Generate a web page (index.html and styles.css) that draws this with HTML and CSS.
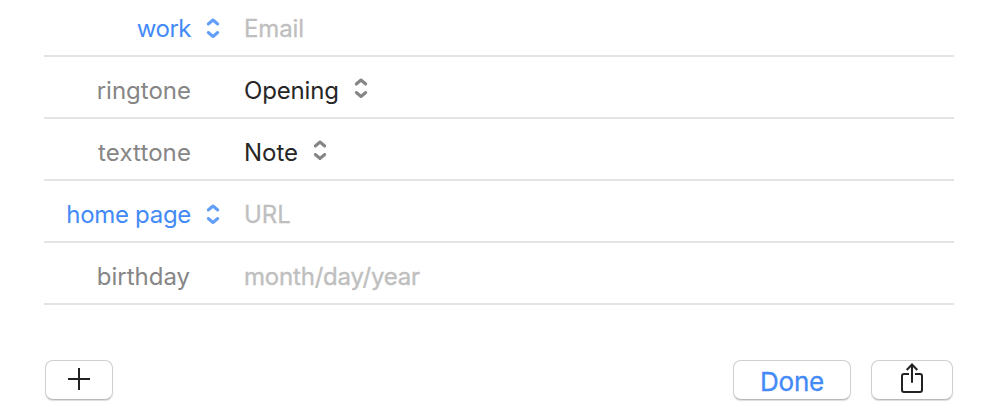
FILE: index.html
```html
<!DOCTYPE html>
<html lang="en">
<head>
<meta charset="utf-8">
<title>Contact</title>
<link rel="stylesheet" href="styles.css">
</head>
<body>
<svg width="0" height="0" class="defs"><symbol id="chevrons" viewBox="0 0 14 22"><path d="M2.300 7 7 3l4.700 4M2.300 15.500 7 19.500l4.700-4"/></symbol></svg>
<main class="card">
  <div class="row"><div class="label link"><span class="t-work">work</span></div><svg class="chev blue"><use href="#chevrons"/></svg><div class="value empty"><span class="t-email">Email</span></div></div>
  <div class="row"><div class="label"><span class="t-ring">ringtone</span></div><div class="value"><span class="t-opening">Opening</span><svg class="chev"><use href="#chevrons"/></svg></div></div>
  <div class="row"><div class="label"><span class="t-text">texttone</span></div><div class="value"><span class="t-note">Note</span><svg class="chev"><use href="#chevrons"/></svg></div></div>
  <div class="row"><div class="label link"><span class="t-home">home page</span></div><svg class="chev blue"><use href="#chevrons"/></svg><div class="value empty"><span class="t-url">URL</span></div></div>
  <div class="row"><div class="label"><span class="t-birth">birthday</span></div><div class="value empty"><span class="t-date">month/day/year</span></div></div>
</main>
<footer class="bar">
  <button class="btn add" aria-label="Add"><svg width="24" height="24"><path d="M12 1v22M1 12h22"/></svg></button>
  <button class="btn done"><span>Done</span></button>
  <button class="btn share" aria-label="Share"><svg width="24" height="32"><path d="M9 12H4Q2 12 2 14V28Q2 30 4 30H20Q22 30 22 28V14Q22 12 20 12H15M12 20.700V2.500M6.700 8 12 2.500l5.300 5.500"/></svg></button>
</footer>
</body>
</html>
```
FILE: styles.css
```css
* { box-sizing: border-box; }
body { margin: 0; height: 417px; overflow: hidden; background: #fff; font-family: Inter, sans-serif; font-size: 24px; color: #262626; }
.defs { position: absolute; }
.card { width: 910px; margin-left: 44px; }
.row { display: grid; grid-template-columns: 147px 53px 1fr; height: 62px; padding-top: 7px; border-bottom: 2px solid #e4e4e4; align-items: center; }
.row:first-child { height: 57px; padding-top: 2px; }
.label { text-align: right; color: #868686; grid-column: 1; }
.label.link { color: #438af7; }
.value { grid-column: 3; display: flex; align-items: center; }
.empty { color: #bfbfbf; }
.t-work { letter-spacing: -0.5px; }
.t-home { letter-spacing: -0.3px; }
.t-text { letter-spacing: 0.1px; }
.t-birth { margin-right: 1px; }
.t-email, .t-opening { letter-spacing: -0.15px; }
.t-date { letter-spacing: -0.2px; -webkit-text-stroke: 0.4px #bfbfbf; }
.t-email, .t-url { -webkit-text-stroke: 0.3px #bfbfbf; }
.chev { width: 14px; height: 22px; fill: none; stroke: #858585; stroke-width: 3; stroke-linecap: round; stroke-linejoin: round; }
.chev.blue { stroke: #629ffa; margin: -1px 0 0 15px; }
.value .chev { margin: -5px 0 0 15px; }
.bar { display: flex; align-items: center; margin: 55px 37px 0 45px; }
.btn { height: 40px; padding: 0; border: 1px solid #d0d0d0; border-bottom-color: #b9b9b9; border-radius: 8px; background: #fff; box-shadow: 0 1px 1px #00000024; display: flex; align-items: center; justify-content: center; }
.btn svg { fill: none; stroke: #222; stroke-width: 2; }
.add { width: 68px; margin-right: auto; }
.add svg { margin-top: -2px; }
.done { width: 118px; margin-right: 20px; padding-top: 3px; color: #438af7; font: 26px Inter, sans-serif; letter-spacing: -0.2px; -webkit-text-stroke: 0.3px #438af7; }
.share { width: 82px; }
.share svg { margin-top: -4px; }
```
